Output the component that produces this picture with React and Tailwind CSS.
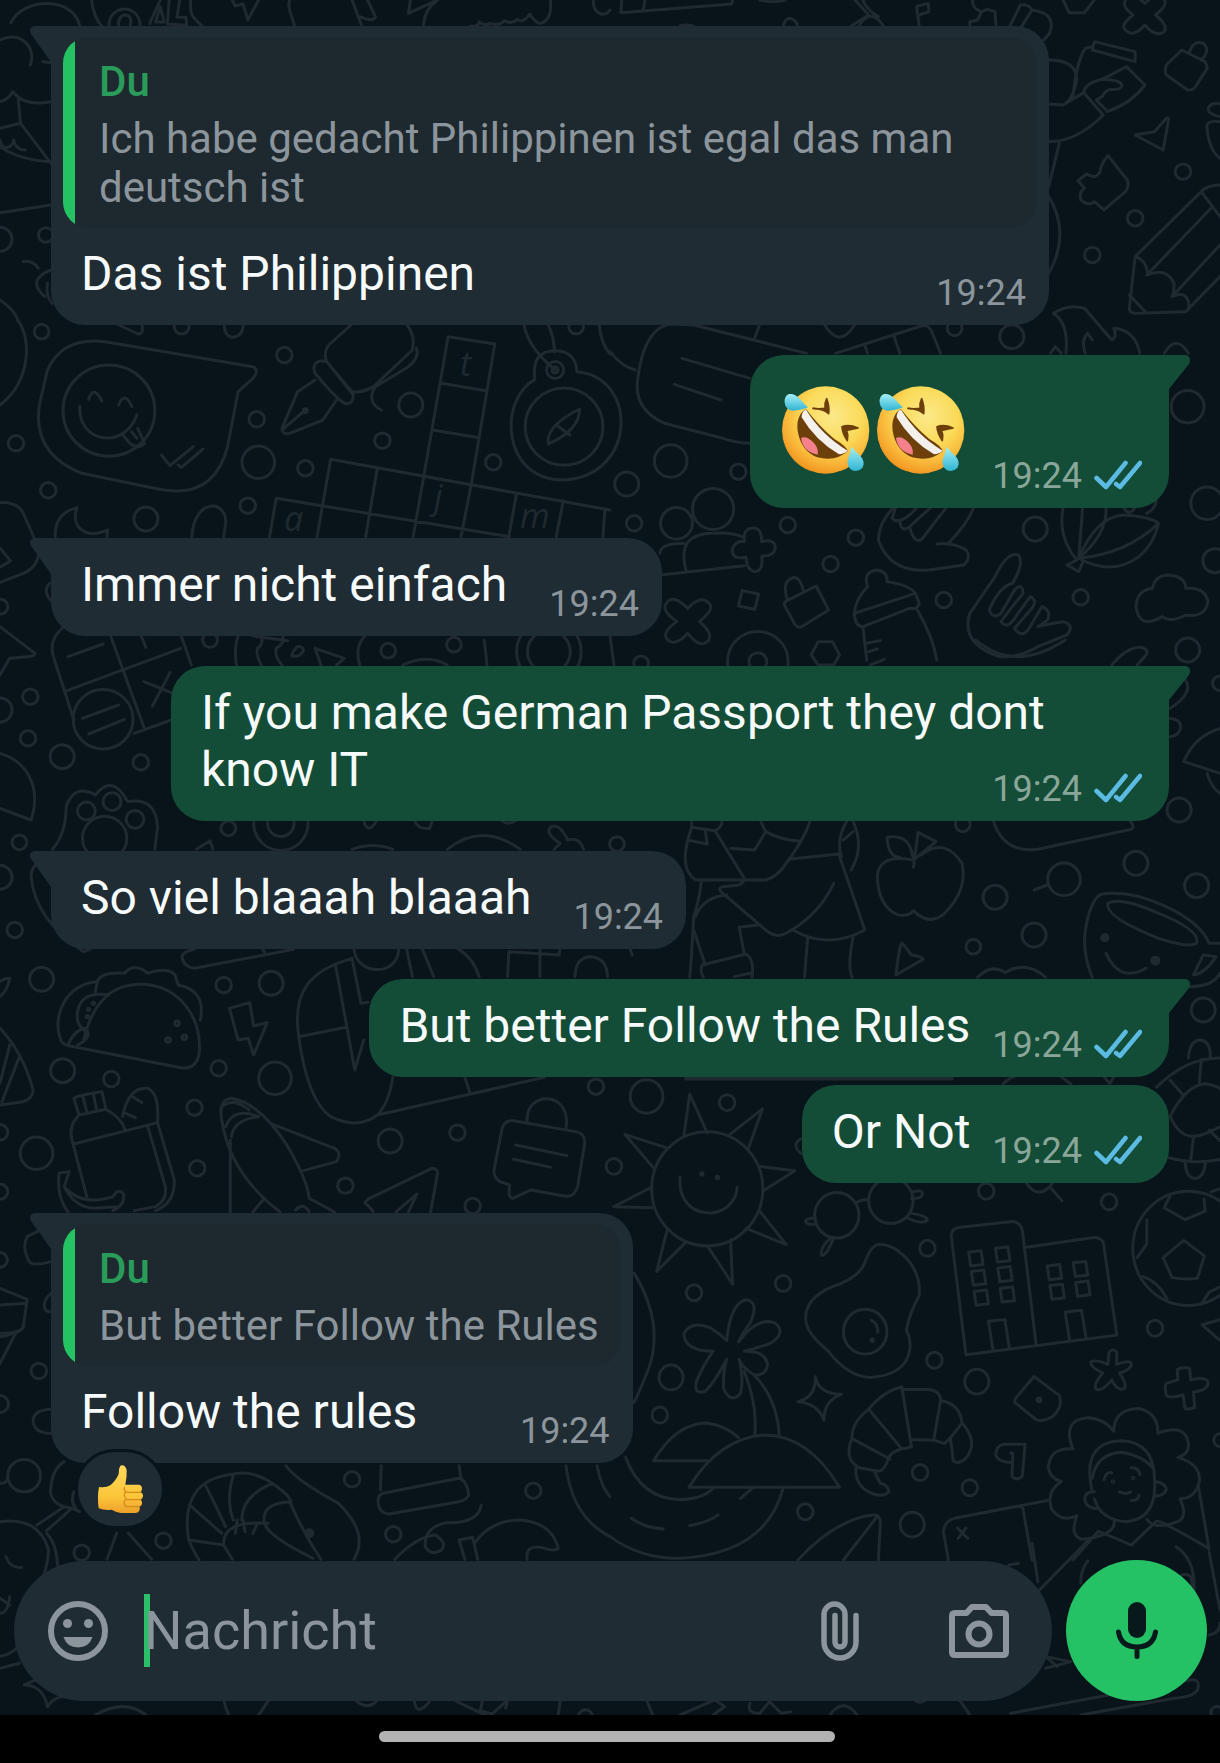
import { useState } from 'react';

const MESSAGES = [
  {
    id: 1,
    own: false,
    tail: true,
    text: 'Das ist Philippinen',
    time: '19:24',
    quote: { author: 'Du', text: 'Ich habe gedacht Philippinen ist egal das man deutsch ist' },
  },
  { id: 2, own: true, tail: true, laughs: 2, time: '19:24' },
  { id: 3, own: false, tail: true, text: 'Immer nicht einfach', time: '19:24' },
  { id: 4, own: true, tail: true, text: 'If you make German Passport they dont know IT', time: '19:24' },
  { id: 5, own: false, tail: true, text: 'So viel blaaah blaaah', time: '19:24' },
  { id: 6, own: true, tail: true, text: 'But better Follow the Rules', time: '19:24' },
  { id: 7, own: true, tail: false, text: 'Or Not', time: '19:24' },
  {
    id: 8,
    own: false,
    tail: true,
    text: 'Follow the rules',
    time: '19:24',
    quote: { author: 'Du', text: 'But better Follow the Rules' },
    reaction: true,
  },
];

// The wallpaper is drawn in tiles. Each tile has its own origin and scale:
// paths are doodle outlines, dots are [x, y, r].
const TILES = [
  {
    at: 'translate(0 0) scale(.389 .3333)',
    paths: [
      'M28 68C60-10 190-10 205 78M235 0C240 40 250 65 262 78',
      'M280 78C280 10 360 10 360 78M305 78C300 35 345 35 335 75',
      'M385 70L412 0M435 0L430 72L480 76L478 52L455 52L462 0M400 66L412 20L422 66ZM490 0C492 30 480 40 520 78',
      'M597 0L605 18L625 12L637 60L665 0M745 0C735 20 755 60 757 78M905 0L930 78M945 0L965 50Q960 68 925 50',
      'M1055 0L1050 40L1125 0C1100 20 1090 50 1088 78M1415 0Q1420 60 1390 70M1210 78Q1228 82 1232 66Q1245 80 1260 70Q1280 80 1298 62Q1315 74 1330 58Q1345 72 1362 42Q1370 60 1385 70',
      'M1525 0C1525 50 1560 50 1568 30M0 120C50 90 95 140 78 195M110 185L132 188',
      'M0 305Q20 300 33 275Q60 320 131 305M47 300L53 370L0 385M53 370L131 490M0 420Q5 450 25 440Q35 430 35 420Q40 450 65 450M0 440Q50 480 131 485M0 638L131 615',
      'M60 785Q85 780 98 805M131 810C85 830 85 860 115 890M122 850Q117 890 134 910M0 900C25 920 40 940 46 960',
    ],
    dots: [[0, 718, 31], [118, 705, 19]],
  },
  {
    at: 'translate(610 0) scale(.389 .3333)',
    paths: [
      'M30 0L28 38L313 12L315 0M90 0L85 32M385 0Q420 10 450 0M445 78Q450 55 463 55Q480 60 482 78M180 78Q195 72 215 78',
      'M630 0L665 45L620 78M650 0Q660 30 690 50M640 78Q670 20 703 78M795 78L788 20L818 10L820 35L795 45',
      'M932 0Q930 25 955 35L970 28L990 35L992 78M925 78V65L945 60L955 35M1028 78L1055 15Q1075 10 1085 30L1055 85M1085 30Q1150 40 1130 100L1115 120',
      'M1165 0L1180 38H1220L1245 0',
      'M1325 0Q1315 20 1345 45Q1310 75 1325 90Q1345 115 1375 75Q1405 115 1425 95Q1435 75 1402 45Q1435 15 1425 0M1365 0L1375 10L1385 0',
      'M1245 125L1350 155V185L1240 150ZM1240 140L1222 145Q1200 180 1190 290M1128 180Q1200 180 1200 240Q1190 300 1165 315L1128 312M1165 315L1218 278L1268 345Q1200 425 1128 425',
      'M1218 278Q1220 250 1265 238Q1320 240 1315 260Q1310 270 1285 268Q1270 275 1265 290L1250 300L1275 330M1265 238L1328 200L1375 255Q1340 310 1278 335',
      'M1470 150L1430 195Q1425 215 1430 225L1485 270Q1500 270 1505 260L1535 205Q1535 195 1530 185ZM1490 155Q1500 120 1525 130Q1545 150 1520 180',
      'M1350 405L1400 395L1430 355Q1438 350 1435 365L1422 450ZM1568 350Q1530 340 1540 320Q1550 305 1568 312M1568 365Q1530 360 1535 385Q1540 450 1568 475',
      'M1280 467L1330 540Q1335 560 1325 575L1270 630L1245 605Q1230 620 1210 600Q1205 575 1220 565L1203 542L1225 522Q1250 540 1260 515Q1262 490 1280 467Z',
      'M1568 555Q1535 555 1520 575L1350 770L1335 925Q1335 940 1350 940L1480 935L1568 830M1520 575L1568 650M1545 625L1380 825M1568 735L1445 890M1350 770Q1380 780 1382 825Q1430 800 1450 850Q1450 880 1445 890Q1480 870 1488 910Q1490 930 1480 935M1335 885L1378 938',
      'M1155 430L1128 560M1128 590Q1185 700 1128 820',
    ],
    dots: [[1473, 515, 20], [1350, 655, 20], [1240, 765, 20]],
  },
  {
    at: 'translate(0 320) scale(.389 .3333)',
    paths: [
      'M45 0C85 60 75 190 0 255M300 12L355 42Q370 45 365 12M577 12C572 67 627 62 625 12',
      // Speech bubble with a winking face
      'M270 65L650 140Q668 150 650 175L612 215L585 380Q550 540 410 508L210 460Q80 400 102 250L122 150Q160 50 270 65Z',
      'M228 238Q240 193 262 243M305 255Q320 210 339 260M205 258C200 370 320 390 352 285M316 345L334 370Q354 390 372 370L354 325M338 335L352 355M415 405L437 437L497 380M458 435L466 443L522 387',
      'M142 650Q140 580 198 563C180 620 220 660 277 630L275 650M493 650C500 530 585 540 580 610L575 650',
      'M0 548Q45 545 60 580L90 660M0 685L27 722L0 742M100 690Q100 740 60 760L0 787M128 790Q108 815 133 845',
      // Fountain pen
      'M905 12L845 75Q830 100 840 125L905 215Q930 220 960 200L1060 90Q1070 50 1045 12M810 160Q800 130 825 122L840 125L908 225Q910 250 890 252Q870 245 810 160M810 180L765 215L725 325Q725 345 745 340L830 300L865 240M730 325L785 270M1070 85Q1080 110 1050 140L965 200Q940 245 980 270',
      // Crossword
      'M1152 50L1272 72L1212 490L1185 650M1152 50L1090 465L1062 650M1135 190L1248 212M1112 330L1225 352M850 418L1568 570M850 418L815 650M970 445L940 650M710 535L1310 650M710 535L693 650M1328 520L1308 650M1448 542L1430 650M1555 570L1550 650',
      // Compass
      'M1375 178C1280 240 1290 480 1447 480C1640 470 1640 170 1483 155M1375 178Q1365 90 1430 92Q1480 95 1483 155M1410 372Q1400 320 1490 267Q1490 330 1410 372ZM1430 315L1465 345M1347 12Q1355 80 1427 150M1408 12Q1425 50 1425 95M1540 12Q1545 72 1568 102',
    ],
    dots: [
      [107, 35, 19], [467, 20, 19], [1481, 20, 19], [41, 370, 20], [731, 105, 20], [660, 298, 20], [785, 445, 20],
      [124, 511, 20], [637, 557, 20], [983, 362, 20], [1268, 427, 20], [0, 860, 20], [375, 597, 31], [1056, 255, 31],
      [664, 427, 42], [280, 272, 118], [1450, 320, 100], [1427, 150, 22], [1427, 150, 8], [785, 272, 5],
    ],
  },
  {
    at: 'translate(610 320) scale(.389 .3333)',
    paths: [
      'M360 370Q330 370 290 355L140 310Q65 270 70 190Q85 20 160 12L215 15L505 100M385 12L370 60M185 115L360 175M165 193L285 240',
      'M0 95Q30 140 65 150M550 12Q590 90 630 12M580 100L800 18Q815 12 825 30L850 100M655 75L662 100M730 48L745 100',
      'M1140-20Q1180-50 1220-35Q1260 20 1290 60Q1305 50 1295 25Q1350 30 1362 100M1140-20Q1180 10 1172 100M1132 100L1145 80L1160 100M1240 60L1228 40Q1210 60 1222 100M1425 100Q1455 40 1487 100',
      'M195 750Q170 640 265 640Q310 635 340 650M130 765L345 737M190 670Q130 670 128 700',
      'M345 655Q345 620 375 625Q390 630 390 665Q425 655 425 685Q420 710 390 708Q395 755 372 755Q350 750 350 712Q310 720 315 685Q325 660 345 665Z',
      'M145 850Q160 820 200 865Q235 820 258 855Q265 870 230 905Q270 945 250 965Q230 985 200 940Q165 985 145 955Q135 935 172 905Q130 870 145 850Z',
      'M340 812L382 822L372 868L330 858ZM450 845L530 798L562 870L490 922Q480 922 475 912L448 855ZM455 835Q440 780 475 772Q490 775 498 815',
      'M662 800Q650 755 685 750Q715 755 712 785Q770 795 785 820L795 850Q790 870 770 865L650 920Q630 920 628 880L785 820M662 800Q630 840 628 880M650 920L660 1020M790 870Q830 950 840 1020M660 970L695 962M665 995L687 987M670 1035L705 1018',
      'M730 560Q690 610 690 660Q720 760 820 750L910 735Q930 710 915 690Q880 665 840 672M735 560L725 595Q745 620 790 562M745 605Q750 640 770 620L825 562M770 620Q780 670 800 660L865 562M935 562Q920 610 870 670',
      'M1050 705Q1020 695 990 770L925 880Q900 970 1000 1010Q1050 1015 1100 980L1175 945Q1195 915 1165 905Q1130 910 1100 920M1050 705Q1065 730 1035 790Q1000 800 975 870Q985 900 1005 880L1040 810Q1060 785 1062 820Q1020 880 1005 905Q1020 930 1040 895L1080 830Q1100 840 1085 865L1040 925Q1060 960 1080 920L1110 860Q1135 870 1125 900L1100 920',
      'M1165 562Q1150 650 1200 720L1175 735L1205 755L1215 728M1215 562L1205 715M1275 562Q1280 640 1205 715Q1250 590 1320 585Q1390 590 1410 610Q1330 700 1205 715Q1290 770 1360 710Q1400 670 1410 610M1320 562Q1335 592 1350 562M1380 580Q1400 570 1405 540',
      'M1395 805Q1400 765 1437 765Q1480 770 1480 805Q1530 800 1537 845Q1530 895 1480 885Q1440 910 1420 890Q1360 930 1352 860Q1355 810 1395 805Z',
      'M535 965H572L590 1005L575 1035H535L517 1005ZM1290 1035Q1330 980 1365 982Q1390 990 1375 1010L1355 1035M0 945L10 1035M940 960Q1040 1060 1170 960',
    ],
    dots: [
      [886, 25, 19], [330, 455, 20], [62, 610, 20], [457, 615, 20], [632, 653, 20], [567, 732, 20], [858, 840, 20],
      [1210, 832, 20], [80, 1030, 19], [1033, 50, 31], [43, 492, 31], [1093, 627, 31], [1555, 722, 31], [1485, 990, 31],
      [1485, 260, 42], [156, 423, 42], [1535, 550, 42], [265, 567, 53], [171, 610, 41], [380, 1025, 78], [380, 1025, 23],
    ],
  },
  {
    at: 'translate(0 640) scale(.389 .3333)',
    paths: [
      'M0-40L90 40Q90 50 70 50L25 55L0 105M165-40Q120 0 140 60L190 240M285-10L370 262M465-15L492 75M165 155L465 25M345 280L440 240M175 50L265 12M360-20L375 22M370 125L440 158M437 98L392 198M212 235L305 195M228 282L320 238',
      'M615-20Q600 20 608 75M670-20Q680 10 662 25Q657 45 672 75M725-20Q735 10 710 25Q705 50 725 75M650-12L740 2M765 20Q750 35 750 48Q770 53 780 33Q780 18 765 20M810 25L885 55L865 75M810 25L825 75',
      'M940-15Q910 20 925 75M1245 0L1252 75M1035 75Q1100 40 1150 75',
      'M0 340C60 360 110 430 80 540L0 505M135 628Q170 580 170 500Q190 430 245 465Q290 400 328 485Q400 470 405 560L398 628',
      'M505 628L540 602L547 628M905 628Q960 605 1010 628M935 542Q945 587 968 542M1065 540Q1075 570 1105 565L1112 540M1150 628Q1240 545 1337 628M1425 628L1440 610Q1400 580 1415 562Q1435 545 1460 600Q1490 590 1500 628M1290 542Q1305 557 1325 542',
      'M100 668Q80 680 80 710Q90 840 215 935L232 928M755 928L500 985Q470 980 468 950Q470 935 500 928M675 928L680 936',
    ],
    dots: [
      [78, 170, 20], [72, 295, 20], [362, 367, 20], [50, 607, 19], [38, 870, 20], [587, 565, 19], [998, 32, 19],
      [1167, 14, 19], [540, 0, 19], [160, 350, 31], [0, 210, 31], [0, 712, 31], [265, 238, 77], [222, 513, 23],
      [288, 485, 23], [347, 538, 23], [269, 595, 57], [722, 550, 70], [722, 550, 34], [1411, 35, 83], [1411, 35, 55],
    ],
  },
  {
    at: 'translate(610 640) scale(.389 .3333)',
    paths: [
      'M1480 120Q1500 160 1440 205M1440 235Q1470 240 1467 265Q1460 290 1440 290M1568 265Q1500 290 1475 365L1568 400M1535 400Q1545 440 1568 460M1090 750L1125 735M985 540Q1010 640 1100 628L1340 568Q1350 560 1338 545',
      // Apple
      'M780 660Q690 640 687 710Q690 800 740 825Q770 830 780 812Q820 860 860 820Q920 750 905 670Q860 590 800 645M780 682L792 577L838 605L780 660M778 650Q770 580 712 592Q715 650 745 652',
      // Walking figure
      'M210 540V562L200 600Q180 690 220 720H400Q420 715 440 690Q500 600 515 540M210 562L270 572Q290 560 288 540M200 600L250 612L245 572M270 572L345 715Q345 730 330 735L290 740Q270 745 300 770L400 870Q430 900 460 875Q540 820 575 730M310 625L372 630L400 575L388 545M400 575Q440 600 485 603M465 657L588 642L655 870Q560 930 470 870M610 540Q580 600 595 650M625 545Q655 620 620 690M600 600L625 575',
      'M235 722Q230 780 215 830Q210 950 205 1012M300 765Q240 770 220 830M215 870L245 975M380 855L332 862L345 940M237 975L350 942Q372 960 365 1012M237 975Q230 990 240 1012M320 1010L360 1000M508 895L500 1012M625 890Q610 980 622 1012',
      'M752 910Q745 905 735 1005L805 958Q805 950 775 945ZM945 1012Q980 970 1015 998Q1070 960 1120 1012M52 928L57 945',
      // Cup
      'M1240 1012Q1210 930 1225 850Q1240 770 1265 762Q1340 750 1430 800Q1520 850 1540 910M1280 790Q1310 770 1400 815Q1520 870 1508 910Q1490 925 1410 895Q1270 830 1280 790ZM1275 940Q1310 1030 1378 985M1540 910H1568M1500 1005L1525 945L1558 950Q1530 1000 1500 1005M1490 1040Q1550 1040 1568 1000',
    ],
    dots: [
      [1568, 130, 19], [907, 553, 19], [934, 920, 19], [18, 612, 19], [1463, 510, 31], [1352, 670, 31], [1508, 737, 31],
      [990, 772, 31], [1090, 885, 31], [1525, 1110, 31], [1167, 718, 42], [1272, 893, 8], [1402, 962, 9],
      [1272, 893, 3], [1402, 962, 3],
    ],
  },
  {
    at: 'translate(0 940) scale(.389 .3333)',
    paths: [
      'M0 170Q20 150 25 115Q10 115 0 125M0 265Q60 340 85 450Q85 475 60 485L0 495M0 430L25 315M5 485L50 350',
      // Taco
      'M158 305C130 230 170 130 250 125Q260 95 320 100Q345 65 380 100Q430 80 450 105L458 135Q530 150 515 240M215 300C240 180 290 130 370 133C460 140 520 230 512 340Q505 390 465 383L180 318Q165 315 158 305M280 165Q200 150 198 230Q200 265 225 275M245 155L250 125M175 315Q190 270 220 265Q240 290 200 315',
      'M590 205L642 187L652 258L687 248L652 345L638 295L612 300Z',
      'M910 25C915 110 1025 110 1025 25M905 55C800 90 750 150 768 290Q790 480 850 530Q920 570 970 525Q1000 490 1010 410M768 290L890 262M862 72L912 390L935 300M905 55L928 190L946 187M1045 25L1060 110M1085 25L1115 110M1175 25Q1215 50 1232 110M1305 110L1308 35L1437 45L1440 25M1388 25V110M1478 110Q1480 50 1520 50Q1560 55 1562 110M970 525L1400 412M1195 412L1208 458',
      // Lunch bag
      'M203 525L190 475Q200 465 262 455L272 505M213 470L223 515M240 462L248 507M203 525Q175 560 185 600L225 778M203 525L272 508Q310 530 322 570M190 612L405 548M315 530Q330 440 380 445Q410 460 405 548M340 470L365 488M318 518L348 533M380 560L425 740Q430 780 400 800L345 812M405 548L448 720Q450 790 400 812',
      'M152 700L178 695L165 740Q210 800 290 770L300 755Q320 750 318 775Q315 800 290 812M152 700Q145 770 175 816M165 740Q190 800 240 805L300 800',
      // Aeroplane
      'M595 475Q560 480 570 540Q590 700 720 816M595 475Q670 490 740 620Q790 720 795 775L860 816M570 500Q600 470 640 510M580 560Q600 500 665 530M595 590Q600 540 665 530M695 550L860 625Q880 640 865 665L780 692M592 600V816M680 775L650 816M760 810Q780 785 795 816',
      'M945 795Q930 790 950 775L1110 685Q1125 685 1125 700L1107 816M1018 816L1072 762L1050 816M945 795L960 815',
      'M1320 542L1480 575Q1505 580 1503 610L1485 740Q1475 775 1450 768L1365 750L1318 775Q1305 775 1310 735L1285 725Q1268 710 1270 690L1290 570Q1295 540 1320 542ZM1355 545C1350 450 1470 450 1455 565M1325 615L1457 647M1320 658L1415 682',
      'M100 872L70 890Q55 920 75 965Q85 980 131 965M0 1045L70 1078L60 1160Q55 1180 0 1190M0 1095L68 1090M131 1060Q110 1080 115 1105Q120 1118 131 1115',
    ],
    dots: [
      [575, 135, 20], [286, 417, 20], [562, 385, 20], [500, 503, 20], [507, 685, 20], [888, 737, 20], [1176, 578, 20],
      [1215, 798, 20], [1532, 440, 20], [0, 577, 20], [0, 755, 20], [0, 960, 19], [107, 118, 31],
      [697, 130, 31], [161, 392, 31], [1003, 603, 31], [94, 640, 42], [707, 415, 42], [455, 250, 6], [432, 300, 6],
      [474, 292, 6], [240, 190, 3], [228, 208, 3], [225, 230, 3],
    ],
  },
  {
    at: 'translate(610 1020) scale(.389 .3444)',
    paths: [
      'M195 166H880M195 171H880M1010 186Q1030 165 1040 165M1160 165L1185 186M1270 165L1285 185L1295 165',
      // Sun
      'M190 335L205 215L250 328M305 335L392 258L355 375M385 425L475 438L395 495M385 555L453 652L350 605M310 638L315 767L250 655M195 645L120 730L148 605M108 545L10 542L108 485M112 430L38 332L148 372M180 455C170 590 320 590 327 485',
      // Glasses
      'M632 532Q645 520 665 522M775 500Q805 490 803 508Q800 520 775 518M770 560Q820 570 815 582Q800 595 765 575M528 575Q500 575 503 587Q510 597 530 592M568 632Q540 660 543 682Q555 690 575 632M1068 470Q1103 530 1140 470M1135 490L1162 525M490 345Q465 365 492 388',
      'M1487 110Q1490 60 1517 58Q1545 62 1543 110M1405 195Q1480 110 1568 110M1440 280Q1480 190 1530 185Q1560 190 1568 200M1440 280Q1470 360 1530 330L1568 310M1437 400Q1500 420 1568 405M1520 115L1515 180M1440 175L1475 220M1540 320L1568 350M1500 340L1493 405M1478 408Q1480 460 1505 460Q1530 455 1530 410M1545 500L1568 490',
      'M1425 545L1440 510M1425 545L1478 580L1530 555L1527 520M1475 640L1528 685L1510 750Q1480 755 1445 748L1422 690ZM1380 580V650L1355 690M1370 745Q1410 760 1432 810M1568 775L1540 790L1520 825',
      // Buildings
      'M915 972L877 625Q878 605 900 602L1035 585Q1055 588 1060 610L1095 940M915 972L1303 915L1268 645Q1260 630 1240 632L1070 660M985 962L973 875L1015 870L1027 955M1182 932L1170 848L1212 843L1224 925',
      'M922 674L954 670L959 710L927 714ZM991 663L1023 659L1028 699L996 703ZM929 730L961 726L966 766L934 770ZM997 720L1029 716L1034 756L1002 760ZM936 788L968 784L973 824L941 828ZM1003 779L1035 775L1040 815L1008 819ZM1124 714L1156 710L1161 750L1129 754ZM1191 705L1223 701L1228 741L1196 745ZM1131 771L1163 767L1168 807L1136 811ZM1197 762L1229 758L1234 798L1202 802Z',
      'M690 652Q670 655 655 705Q640 750 570 775Q500 810 503 870Q505 910 560 960Q610 1035 670 1038Q760 1030 770 960Q775 930 762 900Q770 850 795 800Q800 720 740 670Q715 650 690 652ZM672 872Q690 882 688 907',
      // Palm island
      'M300 930Q310 820 350 812Q385 820 360 880Q340 910 330 935Q380 860 425 880Q455 910 410 940Q370 955 345 962Q400 960 405 1000Q400 1035 370 1030Q340 1010 332 985Q345 1050 335 1085Q310 1115 292 1070Q290 1020 300 985Q270 1050 245 1078Q215 1090 222 1050Q240 1000 265 962Q190 960 190 910Q210 870 260 895Q280 910 300 930M345 1020Q380 1120 372 1205M370 1030Q430 1100 435 1205M203 1357H590Q510 1205 395 1205Q280 1215 203 1357ZM250 1280H112Q170 1170 250 1170Q300 1180 330 1212',
      'M528 1035Q535 1085 595 1087Q550 1105 550 1162Q535 1115 483 1108Q530 1095 528 1035Z',
      // Croissant
      'M665 1130Q700 1080 750 1065L775 1240M665 1130L750 1245Q770 1245 775 1235M665 1130Q620 1170 622 1215L720 1275M750 1245Q720 1255 715 1275Q705 1310 690 1310L640 1300Q600 1275 622 1215M755 1073H815Q850 1075 850 1105L832 1220L775 1218M850 1105Q900 1115 905 1170Q880 1210 860 1230L832 1220M905 1170Q945 1220 920 1265Q900 1295 882 1280Q880 1250 875 1215M632 1302Q630 1350 665 1370Q700 1390 717 1370Q715 1350 695 1345L680 1312',
      'M1067 1232H1010Q990 1240 992 1265Q1000 1285 1035 1285L1033 1325Q1045 1340 1060 1325ZM1035 1285V1257H1030M1090 1035L1155 1090Q1165 1120 1140 1150Q1110 1170 1095 1160L1040 1110Q1040 1100 1045 1095Z',
      'M1280 1000L1283 965Q1293 950 1303 965L1302 1000Q1340 985 1340 1000Q1340 1015 1310 1025Q1330 1060 1322 1070Q1305 1080 1290 1045Q1265 1080 1250 1072Q1240 1060 1267 1025Q1230 1005 1237 992Q1250 985 1280 1000Z',
      'M1460 1045L1458 1015Q1475 1005 1490 1012L1493 1045Q1530 1035 1537 1050Q1540 1075 1500 1080L1503 1125Q1490 1132 1478 1128L1473 1088Q1440 1100 1430 1090Q1425 1065 1430 1055Z',
      // Portrait
      'M1190 1245Q1160 1160 1230 1155Q1275 1160 1295 1195Q1295 1130 1360 1128Q1410 1140 1408 1200Q1480 1170 1487 1230Q1490 1260 1460 1270Q1520 1290 1515 1340Q1505 1390 1465 1390Q1490 1450 1450 1460Q1400 1480 1380 1450M1190 1245Q1130 1240 1127 1300Q1130 1330 1160 1340Q1120 1370 1135 1420Q1160 1460 1200 1440Q1180 1500 1215 1508Q1280 1500 1295 1470L1297 1450',
      'M1240 1370Q1210 1225 1315 1222Q1400 1225 1400 1340Q1405 1450 1325 1457Q1260 1450 1245 1390M1240 1330Q1250 1260 1315 1255Q1370 1265 1395 1300M1245 1370Q1215 1370 1222 1400Q1230 1420 1255 1418M1400 1340Q1430 1345 1430 1365Q1420 1385 1398 1382M1270 1335Q1275 1310 1290 1315M1340 1300Q1360 1300 1362 1320M1310 1370Q1325 1380 1338 1370M1340 1395Q1360 1395 1360 1380M1190 1568L1255 1485Q1270 1490 1340 1525L1405 1455Q1420 1455 1540 1535M1512 1350L1540 1535',
      'M870 1568L857 1485Q860 1455 885 1447L1125 1395M1060 1410L1085 1568M893 1475L920 1505M915 1475L895 1505',
      'M62 735Q140 880 100 1010Q80 1070 62 1110M40 1270Q80 1390 180 1393Q240 1390 265 1360M0 1500Q80 1565 180 1563Q400 1550 445 1360M55 1447Q90 1475 137 1478M205 1468Q250 1460 278 1437M335 1390L368 1357M483 1568Q580 1450 675 1437Q695 1435 695 1460L690 1568M600 1568L688 1440M1568 870L1522 885L1568 930',
    ],
    dots: [
      [301, 240, 20], [216, 792, 20], [445, 765, 20], [816, 663, 20], [967, 497, 20], [1283, 528, 20], [1401, 895, 20],
      [834, 988, 20], [128, 1147, 20], [797, 1314, 20], [925, 1358, 20], [502, 1428, 20], [10, 425, 20],
      [1568, 1220, 16], [157, 1038, 31], [943, 1050, 31], [777, 1465, 31], [94, 222, 42], [250, 490, 143],
      [583, 567, 57], [722, 525, 57], [1487, 663, 143], [656, 905, 56], [236, 447, 3], [276, 457, 3],
      [674, 930, 3], [1103, 1103, 5], [1293, 1340, 2], [1345, 1330, 2],
    ],
  },
  {
    at: 'translate(0 1320) scale(.389 .3333)',
    paths: [
      'M60 20Q55 40 0 40M40 40L0 130M131 268Q85 270 85 305Q90 340 131 340M165 425Q130 450 130 520Q135 550 165 560Q190 565 205 575M190 515Q180 545 195 565M165 560L95 615M180 570L120 632',
      'M0 605Q100 590 125 690Q120 780 80 830M120 640Q145 670 148 735M15 710Q25 745 55 742M0 1045L50 1030M0 1010Q40 1000 60 960M0 835L25 855M0 880Q20 880 25 830M300 640L275 718M330 640L390 718',
      // Shrimp
      'M485 660Q460 480 600 462Q650 450 700 490Q760 540 745 550M485 660Q500 700 512 720M575 675Q570 600 690 610M745 545Q670 550 680 610Q690 650 805 715M700 490Q620 530 622 600M600 465Q580 540 600 600M530 500Q560 570 580 620M492 560L570 640M485 660L575 675L597 718M605 640L610 600M630 635L625 600M650 640L660 615M735 437Q760 480 870 550Q950 640 910 718M745 545Q780 640 825 718',
      'M980 437L978 510M1180 437L1185 475M985 520L1180 475Q1200 480 1205 525Q1200 540 1180 545L1000 582Q975 580 972 550Q970 525 985 520Z',
      'M1015 718Q1070 650 1120 645Q1150 670 1135 690Q1110 710 1093 680Q1090 620 1150 608Q1230 610 1237 555M1180 660L1215 652L1228 718M1180 660L1195 718M1220 670Q1260 600 1340 600Q1420 610 1435 685Q1425 695 1400 685Q1350 670 1355 718',
      'M1455 437Q1470 590 1568 650M1535 437Q1545 500 1568 530M62 1095Q110 1095 122 1160Q140 1125 180 1130M62 1095L110 1070M245 1185Q320 1135 375 1185M575 1140Q580 1165 588 1185M690 1142L665 1185M915 1142Q945 1172 970 1142M1065 1142Q1070 1192 1103 1147M1170 1142L1250 1187M1240 1142L1235 1172L1265 1182L1305 1140L1300 1165M1440 1142L1435 1185M0 490Q20 490 20 470',
    ],
    dots: [
      [100, 153, 20], [0, 252, 22], [210, 698, 20], [420, 662, 20], [905, 478, 20], [1371, 512, 20], [1011, 643, 20],
      [1505, 1190, 18], [62, 467, 42], [795, 640, 9], [795, 640, 4],
    ],
  },
  {
    at: 'translate(610 1500) scale(.389 .3333)',
    paths: [
      'M1085 130L1100 245M1100 275L1230 120M1210 250Q1210 210 1228 183M1455 140Q1510 180 1500 290M1470 225Q1500 215 1495 260M1540 155L1568 330M1540 405Q1568 400 1568 370M1025 195L1050 190M1120 470L1185 485L1120 505M1120 470L1150 500',
      'M1030 640L1490 540Q1520 535 1510 570Q1500 590 1450 595L1210 645M95 603L110 645M180 645L270 600L295 620L265 645M360 610Q350 640 385 640L410 605L440 640L465 635M565 645Q600 590 635 645M900 603L925 645M785 603Q795 610 808 603',
    ],
    dots: [[1560, 637, 15]],
  },
];

function Wallpaper() {
  return (
    <svg
      viewBox="0 0 1220 1715"
      preserveAspectRatio="xMidYMid slice"
      aria-hidden="true"
      className="absolute inset-0 h-full w-full fill-none stroke-[#1f292f] stroke-[3] [&_*]:[vector-effect:non-scaling-stroke]"
      strokeLinecap="round"
      strokeLinejoin="round"
    >
      {TILES.map(tile => (
        <g key={tile.at} transform={tile.at}>
          {tile.paths.map(d => <path key={d} d={d} />)}
          {tile.dots.map(([x, y, r]) => (
            <ellipse key={`${x}-${y}-${r}`} cx={x} cy={y} rx={r} ry={r * 1.16} />
          ))}
        </g>
      ))}
      {/* Crossword letters */}
      <g className="fill-[#1f292f] stroke-none font-['Open_Sans',sans-serif] text-[34px] italic">
        <text x="460" y="376">t</text>
        <text x="434" y="509">j</text>
        <text x="284" y="531">a</text>
        <text x="520" y="528">m</text>
      </g>
    </svg>
  );
}

function Tail({ own }) {
  return own ? (
    <svg viewBox="0 0 22 36" aria-hidden="true" className="absolute top-0 left-full -ml-px h-9 w-[22px] fill-[#144d37]">
      <path d="M0 0H18Q24 2 21 9L1 34H0Z" />
    </svg>
  ) : (
    <svg viewBox="0 0 22 36" aria-hidden="true" className="absolute top-0 right-full -mr-px h-9 w-[22px] fill-[#202c33]">
      <path d="M22 0H4Q-2 2 1 8L21 36H22Z" />
    </svg>
  );
}

function Ticks() {
  return (
    <svg viewBox="0 0 48 30" role="img" aria-label="Gelesen" className="-mt-1 h-[30px] w-12 fill-none stroke-[#5cbbe3] stroke-[4.5]" strokeLinecap="round" strokeLinejoin="round">
      <path d="M2.500 18L12 27L31.500 3M22 24L26 27L46 3" />
    </svg>
  );
}

function LaughEmoji() {
  return (
    <svg viewBox="7 24 285 276" role="img" aria-label="Lachen" className="h-[92px] w-[95px]">
      <defs>
        <radialGradient id="face" cx=".58" cy=".34" r=".68">
          <stop offset="0" stopColor="#fbe98a" />
          <stop offset=".5" stopColor="#fada58" />
          <stop offset=".78" stopColor="#f9b83a" />
          <stop offset="1" stopColor="#f2951f" />
        </radialGradient>
        <linearGradient id="tear" x1="0" y1="0" x2="0" y2="1">
          <stop offset="0" stopColor="#a5f0f6" />
          <stop offset="1" stopColor="#30b4d2" />
        </linearGradient>
      </defs>
      <circle cx="150" cy="162" r="131" fill="url(#face)" />
      <path d="M90 98Q60 120 66 165Q76 225 125 244Q180 258 216 226Q215 212 175 188Q130 150 90 98Z" fill="#6d3f0b" />
      <path d="M90 100Q78 108 78 124Q120 195 190 235Q206 234 216 224Q140 180 90 100Z" fill="#f4f1ec" />
      <path d="M76 186Q92 178 112 198Q130 216 126 236Q82 228 76 186Z" fill="#f3808b" />
      <path d="M112 97Q145 98 159 113Q162 92 153 68Q146 82 148 97Q130 100 112 97Z" fill="#6d3f0b" stroke="#6d3f0b" strokeWidth="5" strokeLinejoin="round" />
      <path d="M247 156Q220 144 199 152Q200 172 215 194Q219 178 213 163Q230 160 247 156Z" fill="#6d3f0b" stroke="#6d3f0b" strokeWidth="5" strokeLinejoin="round" />
      <path d="M97 94Q86 84 72 68Q58 52 40 54Q25 60 27 80Q30 102 52 104Q72 104 97 94Z" fill="url(#tear)" />
      <path d="M228 212Q240 228 256 242Q270 258 260 276Q246 290 228 282Q213 272 216 252Q224 230 228 212Z" fill="url(#tear)" />
    </svg>
  );
}

function ThumbEmoji() {
  return (
    <svg viewBox="78 70 141 150" role="img" aria-label="Daumen hoch" className="h-[50px] w-[47px]">
      <defs>
        <linearGradient id="hand" x1="0" y1="0" x2="0" y2="1">
          <stop offset="0" stopColor="#ffd95a" />
          <stop offset=".65" stopColor="#fbc63a" />
          <stop offset="1" stopColor="#eda02a" />
        </linearGradient>
      </defs>
      <path d="M148 75Q162 70 167 88Q168 108 163 132L204 132Q214 134 213 146Q212 152 208 154Q217 158 216 167Q215 175 209 177Q215 182 213 190Q211 196 205 198Q208 203 205 210Q202 217 192 217H150Q135 215 122 207Q100 210 83 203Q78 170 84 139Q104 142 118 134Q136 118 143 100Q142 84 148 75Z" fill="url(#hand)" />
      <path d="M208 155H170Q158 154 160 140M209 177H168Q156 168 162 156M205 198H166Q156 190 162 178" fill="none" stroke="#d58a1c" strokeWidth="4" strokeLinecap="round" />
    </svg>
  );
}

function Meta({ time, own }) {
  return (
    <span className={`flex items-center gap-3 text-[36px] leading-[41px] ${own ? 'text-[#89a699]' : 'text-[#8b959b]'}`}>
      <time>{time}</time>
      {own && <Ticks />}
    </span>
  );
}

function Quote({ quote }) {
  return (
    <blockquote className="mx-3 mt-[11px] flex overflow-hidden rounded-[26px] bg-[#1e282f]">
      <div className="w-3 shrink-0 bg-[#25c263]" />
      <div className="pt-5 pr-[22px] pb-4 pl-6 text-[42px] leading-[49px]">
        <p className="mb-2 font-medium text-[#2a9c5a]">{quote.author}</p>
        <p className="text-[#8b959b]">{quote.text}</p>
      </div>
    </blockquote>
  );
}

function Bubble({ message }) {
  const { own, tail, text, time, quote, laughs, reaction } = message;
  const corner = !tail ? 'rounded-[34px]' : own ? 'rounded-[34px] rounded-tr-none' : 'rounded-[34px] rounded-tl-none';
  const gap = tail ? 'mt-[30px] first:mt-0' : 'mt-2';

  return (
    <li className={`relative w-fit max-w-[998px] ${corner} ${gap} ${own ? 'self-end bg-[#144d37]' : 'self-start bg-[#202c33]'}`}>
      {tail && <Tail own={own} />}
      {quote && <Quote quote={quote} />}
      {laughs ? (
        <div className="flex items-end gap-6 pt-[29px] pr-[27px] pb-[11px] pl-7">
          <div className="mb-[21px] flex">
            {Array.from({ length: laughs }, (_, i) => <LaughEmoji key={i} />)}
          </div>
          <Meta time={time} own={own} />
        </div>
      ) : (
        <p className={`flow-root pb-[11px] pl-[30px] text-[48px] leading-[57px] text-[#f6fafb] ${quote ? 'pt-[17px]' : 'pt-[18px]'} ${own ? 'pr-[27px]' : 'pr-[23px]'}`}>
          {text}
          <span className={`float-right mt-7 ${own ? 'ml-[22px]' : 'ml-[42px]'}`}>
            <Meta time={time} own={own} />
          </span>
        </p>
      )}
      {reaction && (
        <button type="button" className="absolute -bottom-[66px] left-6 flex h-20 w-[90px] items-center justify-center rounded-full border-[3px] border-[#08131a] bg-[#202c33]">
          <ThumbEmoji />
        </button>
      )}
    </li>
  );
}

function Composer() {
  const [draft, setDraft] = useState('');

  return (
    <form onSubmit={e => e.preventDefault()} className="relative flex items-center gap-[14px] pr-[13px] pb-[14px] pl-[14px]">
      <div className="flex h-[140px] min-w-0 flex-1 items-center rounded-full bg-[#202c33] pr-[43px] pl-[34px]">
        <button type="button" aria-label="Emoji" className="shrink-0">
          <svg viewBox="0 0 60 60" className="h-[60px] w-[60px] fill-[#8b959b]">
            <circle cx="30" cy="30" r="27" className="fill-none stroke-[#8b959b] stroke-[6]" />
            <circle cx="19.500" cy="22.500" r="4.500" />
            <circle cx="40.500" cy="22.500" r="4.500" />
            <path d="M15.500 36H44.500Q41 46.500 30 46.500Q19 46.500 15.500 36Z" />
          </svg>
        </button>
        <div className="ml-9 h-[73px] w-1.5 shrink-0 bg-[#2bbf69]" />
        <input
          type="text"
          aria-label="Nachricht"
          placeholder="Nachricht"
          value={draft}
          onChange={e => setDraft(e.target.value)}
          className="-ml-1.5 min-w-0 flex-1 bg-transparent text-[54px] leading-[64px] text-[#f6fafb] caret-[#2bbf69] outline-none placeholder:text-[#8b959b]"
        />
        <button type="button" aria-label="Anhang" className="shrink-0">
          <svg viewBox="0 0 38 60" className="h-[60px] w-[38px] fill-none stroke-[#8b959b] stroke-[5.5]" strokeLinecap="round">
            <path d="M35 14.500V41A16 16 0 0 1 3 41V13.500A10.500 10.500 0 0 1 24 13.500V41A5 5 0 0 1 14 41V14.500" />
          </svg>
        </button>
        <button type="button" aria-label="Kamera" className="ml-[90px] shrink-0">
          <svg viewBox="0 0 60 54" className="h-[54px] w-[60px] fill-none stroke-[#8b959b] stroke-[6]" strokeLinejoin="round">
            <path d="M6 9H17.500L23 3H37L42.500 9H54Q57 9 57 12V48Q57 51 54 51H6Q3 51 3 48V12Q3 9 6 9Z" />
            <circle cx="30" cy="30" r="10.500" />
          </svg>
        </button>
      </div>
      <button type="button" aria-label="Sprachnachricht" className="flex h-[141px] w-[141px] shrink-0 items-center justify-center rounded-full bg-[#24c264]">
        <svg viewBox="0 0 42 57" className="h-[57px] w-[42px] fill-none stroke-[#08191c] stroke-[5]" strokeLinecap="round">
          <rect x="12" y="0" width="18" height="36" rx="9" className="fill-[#08191c] stroke-none" />
          <path d="M2.500 30Q5 45 21 45Q37 45 39.500 30M21 45V54.500" />
        </svg>
      </button>
    </form>
  );
}

export default function App() {
  return (
    <div className="flex min-h-screen flex-col bg-black font-['Roboto',sans-serif]">
      <main className="relative flex flex-1 flex-col overflow-hidden bg-[#08131a]">
        <Wallpaper />
        <ul className="relative flex flex-1 flex-col px-[51px] pt-[26px] pb-[90px]">
          {MESSAGES.map(m => <Bubble key={m.id} message={m} />)}
        </ul>
        <Composer />
      </main>

      {/* Gesture bar */}
      <footer className="flex h-12 items-center justify-center pr-1.5 pb-1.5">
        <div className="h-[11px] w-[456px] rounded-full bg-[#b2b2b2]" />
      </footer>
    </div>
  );
}
